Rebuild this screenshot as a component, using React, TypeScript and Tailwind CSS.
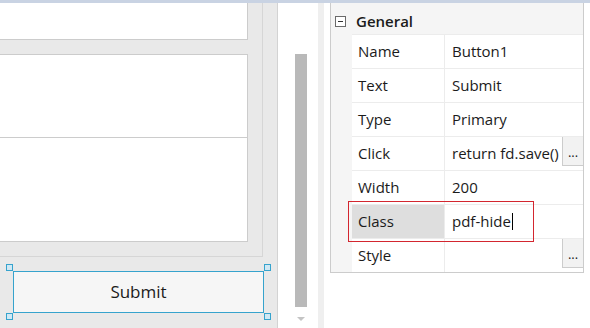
import React from "react";

type Prop = { label: string; value: string; more?: boolean; active?: boolean };

const props: Prop[] = [
  { label: "Name", value: "Button1" },
  { label: "Text", value: "Submit" },
  { label: "Type", value: "Primary" },
  { label: "Click", value: "return fd.save()", more: true },
  { label: "Width", value: "200" },
  { label: "Class", value: "pdf-hide", active: true },
  { label: "Style", value: "", more: true },
];

function Handle({ pos }: { pos: string }) {
  return (
    <span
      className={`absolute h-[7px] w-[7px] border border-[#36a3cd] bg-[#cfe8f4] ${pos}`}
    />
  );
}

function PropRow({ p }: { p: Prop }) {
  return (
    <div className="relative flex h-[34px] border-t border-[#ececec]">
      <div
        className={`flex w-[93px] items-center border-r border-[#ececec] pl-[6px] ${
          p.active ? "bg-[#dedede]" : ""
        }`}
      >
        {p.label}
      </div>
      <div className="flex min-w-0 flex-1 items-center pl-[7px]">
        <span className="flex flex-1 items-center whitespace-nowrap">
          {p.value}
          {p.active && <span className="ml-[1px] inline-block h-[17px] w-[1px] bg-black" />}
        </span>
        {p.more && (
          <button className="flex h-[29px] w-[21px] shrink-0 items-end justify-center self-start border-b border-l border-[#cccccc] bg-[#f2f2f2] pb-[6px] text-[13px] leading-none text-[#222]">
            ...
          </button>
        )}
      </div>
      {p.active && (
        <span className="pointer-events-none absolute -left-[4px] -top-[4px] z-10 h-[41px] w-[186px] ring-1 ring-inset ring-[#d3262f]" />
      )}
    </div>
  );
}

export default function App() {
  return (
    <div
      className="flex h-[328px] w-[590px] flex-col overflow-hidden bg-white text-[15px] text-[#1b1b1b]"
      style={{ fontFamily: '"Open Sans", "Noto Sans", sans-serif' }}
    >
      {/* top strip */}
      <div className="h-[3px] bg-[#c9d3e3]" />

      <div className="flex flex-1">
        {/* Designer canvas */}
        <div className="flex w-[278px] flex-col border-r border-[#d3d3d3] bg-[#e9e9e9]">
          <div className="h-[254px] w-[263px] border-b border-r border-[#d6d6d6]">
            <div className="h-[37px] w-[248px] border-b border-r border-[#cccccc] bg-white" />
            <div className="mt-[14px] h-[188px] w-[248px] border-y border-r border-[#cccccc] bg-white">
              <div className="h-[83px] border-b border-[#cccccc]" />
            </div>
          </div>
          <div className="relative ml-[13px] mt-[14px] flex h-[42px] w-[251px] items-center justify-center border border-[#36a3cd] bg-[#f6f6f6] text-[17px]">
            Submit
            <Handle pos="-left-[8px] -top-[8px]" />
            <Handle pos="-right-[8px] -top-[8px]" />
            <Handle pos="-bottom-[8px] -left-[8px]" />
            <Handle pos="-bottom-[8px] -right-[8px]" />
          </div>
        </div>

        {/* scrollbar */}
        <div className="flex w-[40px] flex-col bg-white">
          <div className="ml-[17px] mt-[51px] h-[253px] w-[12px] bg-[#b9b9b9]" />
          <svg className="ml-[19px] mt-[10px]" width="8" height="4" viewBox="0 0 8 4">
            <path d="M0 0 H8 L4 4 Z" fill="#c4c4c4" />
          </svg>
        </div>
        <div className="w-[6px] bg-[#efefef]" />
        <div className="w-[6px]" />

        {/* property grid */}
        <div className="flex h-[270px] w-[254px] flex-col border-x border-b border-[#cccccc] bg-[#f5f5f5]">
          <div className="flex h-[31px] items-center pl-[4px] pt-[5px]">
            <span className="relative h-[11px] w-[11px] border border-[#6a6a6a] bg-white">
              <span className="absolute left-[2px] top-[4px] h-[1px] w-[5px] bg-[#333]" />
            </span>
            <span className="ml-[10px] text-[15px] font-semibold">General</span>
          </div>
          <div className="flex flex-1">
            <div className="w-[21px]" />
            <div className="flex-1 bg-white">
              {props.map((p) => (
                <PropRow key={p.label} p={p} />
              ))}
            </div>
          </div>
        </div>
      </div>
    </div>
  );
}
